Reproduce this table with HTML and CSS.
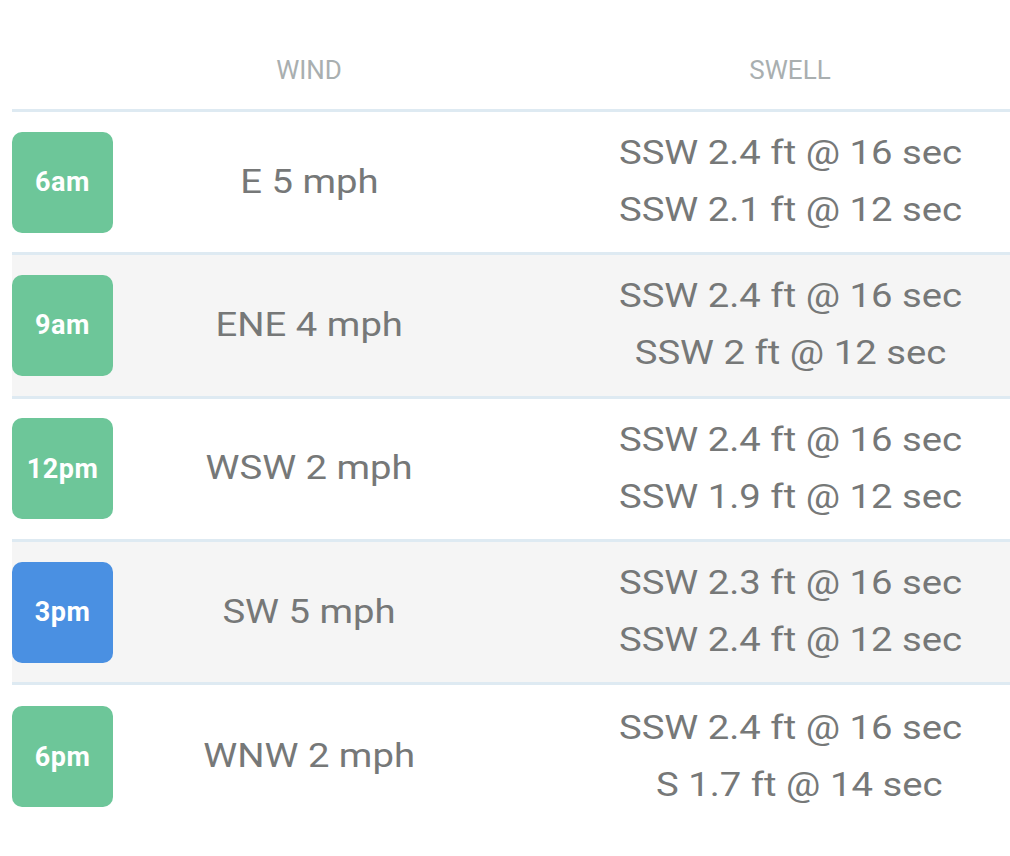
FILE: index.html
```html
<!DOCTYPE html>
<html>
<head>
<meta charset="utf-8">
<link rel="stylesheet" href="styles.css">
</head>
<body>
<div class="forecast">
  <div class="row head">
    <div class="cell time"></div>
    <div class="cell wind">WIND</div>
    <div class="cell swell">SWELL</div>
  </div>
  <div class="row">
    <div class="cell time"><span class="badge">6am</span></div>
    <div class="cell wind"><span class="t">E 5 mph</span></div>
    <div class="cell swell"><div><span class="t">SSW 2.4 ft @ 16 sec</span></div><div><span class="t">SSW 2.1 ft @ 12 sec</span></div></div>
  </div>
  <div class="row alt">
    <div class="cell time"><span class="badge">9am</span></div>
    <div class="cell wind"><span class="t">ENE 4 mph</span></div>
    <div class="cell swell"><div><span class="t">SSW 2.4 ft @ 16 sec</span></div><div><span class="t">SSW 2 ft @ 12 sec</span></div></div>
  </div>
  <div class="row">
    <div class="cell time"><span class="badge">12pm</span></div>
    <div class="cell wind"><span class="t">WSW 2 mph</span></div>
    <div class="cell swell"><div><span class="t">SSW 2.4 ft @ 16 sec</span></div><div><span class="t">SSW 1.9 ft @ 12 sec</span></div></div>
  </div>
  <div class="row alt">
    <div class="cell time"><span class="badge now">3pm</span></div>
    <div class="cell wind"><span class="t">SW 5 mph</span></div>
    <div class="cell swell"><div><span class="t">SSW 2.3 ft @ 16 sec</span></div><div><span class="t">SSW 2.4 ft @ 12 sec</span></div></div>
  </div>
  <div class="row last">
    <div class="cell time"><span class="badge">6pm</span></div>
    <div class="cell wind"><span class="t">WNW 2 mph</span></div>
    <div class="cell swell"><div><span class="t">SSW 2.4 ft @ 16 sec</span></div><div><span class="t pad">  S 1.7 ft @ 14 sec</span></div></div>
  </div>
</div>
</body>
</html>
```

FILE: styles.css
```css
html, body {
  margin: 0;
  padding: 0;
  background: #ffffff;
}
body {
  font-family: Roboto, "Liberation Sans", sans-serif;
  color: #767878;
}
.forecast {
  padding-left: 12px;
  overflow: hidden;
}
.row {
  display: grid;
  grid-template-columns: 101px 392px 1fr;
  align-items: center;
  box-sizing: border-box;
  height: 143.33px;
  border-bottom: 3px solid #deeaf2;
}
.row.last {
  border-bottom: none;
}
.row.alt {
  background: #f5f5f5;
}
.row.head {
  height: 112px;
  align-items: start;
}
.cell.wind {
  text-align: center;
  font-size: 34px;
  line-height: 57px;
  padding-bottom: 2px;
}
.cell.swell {
  text-align: center;
  font-size: 34px;
  line-height: 57px;
  padding-left: 65px;
  padding-bottom: 2px;
}
.t {
  display: inline-block;
  transform: scaleX(1.125);
}
.t.pad {
  white-space: pre;
}
.head .cell.wind,
.head .cell.swell {
  font-size: 26px;
  line-height: 30px;
  color: #a9afb0;
  padding-top: 55px;
  padding-bottom: 0;
}
.badge {
  display: flex;
  align-items: center;
  justify-content: center;
  width: 101px;
  height: 101px;
  border-radius: 10px;
  background: #6dc699;
  color: #ffffff;
  font-weight: 700;
  font-size: 27px;
  letter-spacing: 0.5px;
}
.badge.now {
  background: #4a90e2;
}
```
